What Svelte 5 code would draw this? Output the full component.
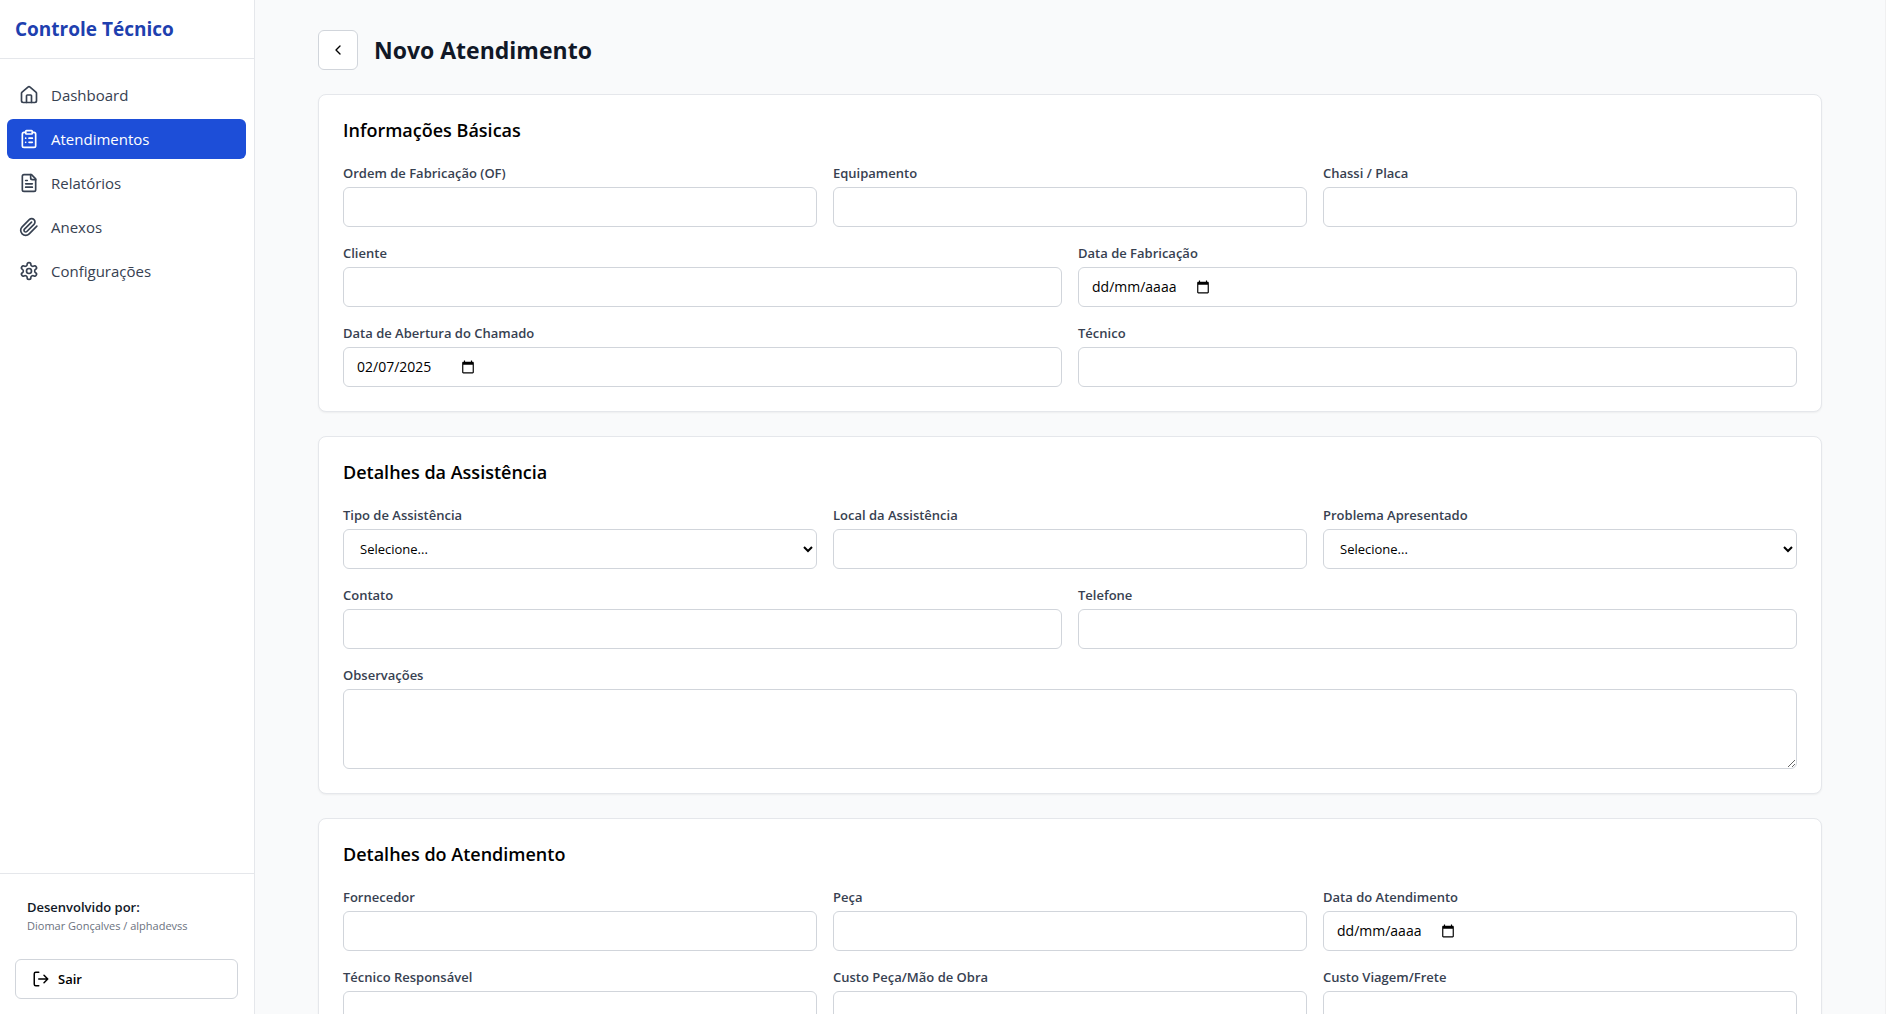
<script lang="ts">
  type Field = {
    id: string;
    label: string;
    kind?: 'text' | 'date' | 'select' | 'area';
    value?: string;
  };
  type Section = { title: string; rows: Field[][] };

  const nav = [
    { label: 'Dashboard', icon: 'home' },
    { label: 'Atendimentos', icon: 'clipboard', active: true },
    { label: 'Relatórios', icon: 'file' },
    { label: 'Anexos', icon: 'clip' },
    { label: 'Configurações', icon: 'gear' }
  ];

  const sections: Section[] = [
    {
      title: 'Informações Básicas',
      rows: [
        [
          { id: 'of', label: 'Ordem de Fabricação (OF)' },
          { id: 'equipamento', label: 'Equipamento' },
          { id: 'chassi', label: 'Chassi / Placa' }
        ],
        [
          { id: 'cliente', label: 'Cliente' },
          { id: 'fabricacao', label: 'Data de Fabricação', kind: 'date' }
        ],
        [
          { id: 'abertura', label: 'Data de Abertura do Chamado', kind: 'date', value: '02/07/2025' },
          { id: 'tecnico', label: 'Técnico' }
        ]
      ]
    },
    {
      title: 'Detalhes da Assistência',
      rows: [
        [
          { id: 'tipo', label: 'Tipo de Assistência', kind: 'select' },
          { id: 'local', label: 'Local da Assistência' },
          { id: 'problema', label: 'Problema Apresentado', kind: 'select' }
        ],
        [
          { id: 'contato', label: 'Contato' },
          { id: 'telefone', label: 'Telefone' }
        ],
        [{ id: 'observacoes', label: 'Observações', kind: 'area' }]
      ]
    },
    {
      title: 'Detalhes do Atendimento',
      rows: [
        [
          { id: 'fornecedor', label: 'Fornecedor' },
          { id: 'peca', label: 'Peça' },
          { id: 'atendimento', label: 'Data do Atendimento', kind: 'date' }
        ],
        [
          { id: 'responsavel', label: 'Técnico Responsável' },
          { id: 'custo-peca', label: 'Custo Peça/Mão de Obra' },
          { id: 'custo-viagem', label: 'Custo Viagem/Frete' }
        ]
      ]
    }
  ];
</script>

<div class="shell">
  <aside class="sidebar">
    <div class="brand">Controle Técnico</div>
    <nav>
      {#each nav as item}
        <a href="#{item.icon}" class:active={item.active}>
          <svg class="icon" viewBox="0 0 24 24" aria-hidden="true">
            {#if item.icon === 'home'}
              <path d="M15 21v-8a1 1 0 0 0-1-1h-4a1 1 0 0 0-1 1v8" />
              <path d="M3 10a2 2 0 0 1 .709-1.528l7-5.999a2 2 0 0 1 2.582 0l7 5.999A2 2 0 0 1 21 10v9a2 2 0 0 1-2 2H5a2 2 0 0 1-2-2z" />
            {:else if item.icon === 'clipboard'}
              <rect x="8" y="2" width="8" height="4" rx="1" />
              <path d="M16 4h2a2 2 0 0 1 2 2v14a2 2 0 0 1-2 2H6a2 2 0 0 1-2-2V6a2 2 0 0 1 2-2h2M12 11h4M12 16h4M8 11h.01M8 16h.01" />
            {:else if item.icon === 'file'}
              <path d="M15 2H6a2 2 0 0 0-2 2v16a2 2 0 0 0 2 2h12a2 2 0 0 0 2-2V7Z" />
              <path d="M14 2v4a2 2 0 0 0 2 2h4M10 9H8M16 13H8M16 17H8" />
            {:else if item.icon === 'clip'}
              <path d="m21.44 11.05-9.19 9.19a6 6 0 0 1-8.49-8.49l8.57-8.57A4 4 0 1 1 18 8.84l-8.59 8.57a2 2 0 0 1-2.83-2.83l8.49-8.48" />
            {:else}
              <path d="M12.22 2h-.44a2 2 0 0 0-2 2v.18a2 2 0 0 1-1 1.73l-.43.25a2 2 0 0 1-2 0l-.15-.08a2 2 0 0 0-2.73.73l-.22.38a2 2 0 0 0 .73 2.73l.15.1a2 2 0 0 1 1 1.72v.51a2 2 0 0 1-1 1.74l-.15.09a2 2 0 0 0-.73 2.73l.22.38a2 2 0 0 0 2.73.73l.15-.08a2 2 0 0 1 2 0l.43.25a2 2 0 0 1 1 1.73V20a2 2 0 0 0 2 2h.44a2 2 0 0 0 2-2v-.18a2 2 0 0 1 1-1.73l.43-.25a2 2 0 0 1 2 0l.15.08a2 2 0 0 0 2.73-.73l.22-.39a2 2 0 0 0-.73-2.73l-.15-.08a2 2 0 0 1-1-1.74v-.5a2 2 0 0 1 1-1.74l.15-.09a2 2 0 0 0 .73-2.73l-.22-.38a2 2 0 0 0-2.73-.73l-.15.08a2 2 0 0 1-2 0l-.43-.25a2 2 0 0 1-1-1.73V4a2 2 0 0 0-2-2z" />
              <circle cx="12" cy="12" r="3" />
            {/if}
          </svg>
          <span>{item.label}</span>
        </a>
      {/each}
    </nav>
    <div class="foot">
      <div class="credit">
        <strong>Desenvolvido por:</strong>
        <span>Diomar Gonçalves / alphadevss</span>
      </div>
      <button type="button" class="logout">
        <svg class="icon medium" viewBox="0 0 24 24" aria-hidden="true">
          <path d="M9 21H5a2 2 0 0 1-2-2V5a2 2 0 0 1 2-2h4M16 17l5-5-5-5M21 12H9" />
        </svg>
        Sair
      </button>
    </div>
  </aside>

  <main>
    <div class="content">
      <header>
        <button type="button" class="back" aria-label="Voltar">
          <svg class="icon small" viewBox="0 0 24 24" aria-hidden="true">
            <path d="m15 18-6-6 6-6" />
          </svg>
        </button>
        <h1>Novo Atendimento</h1>
      </header>

      <form>
        {#each sections as section}
          <section class="card">
            <h2>{section.title}</h2>
            <div class="rows">
              {#each section.rows as row}
                <div class="row">
                  {#each row as field}
                    <div class="field">
                      <label for={field.id}>{field.label}</label>
                      {#if field.kind === 'select'}
                        <select id={field.id} class="control">
                          <option>Selecione...</option>
                        </select>
                      {:else if field.kind === 'area'}
                        <textarea id={field.id} class="control"></textarea>
                      {:else if field.kind === 'date'}
                        <div class="control date">
                          <input id={field.id} type="text" placeholder="dd/mm/aaaa" value={field.value ?? ''} />
                          <button type="button" aria-label="Abrir calendário">
                            <svg viewBox="0 0 24 24" aria-hidden="true">
                              <path d="M20 3h-1V1h-2v2H7V1H5v2H4c-1.1 0-2 .9-2 2v16c0 1.100.9 2 2 2h16c1.100 0 2-.9 2-2V5c0-1.100-.9-2-2-2zm0 18H4V8h16v13z" />
                            </svg>
                          </button>
                        </div>
                      {:else}
                        <input id={field.id} type="text" class="control" />
                      {/if}
                    </div>
                  {/each}
                </div>
              {/each}
            </div>
          </section>
        {/each}
      </form>
    </div>
  </main>
</div>

<style>
  :global(body) {
    margin: 0;
  }
  .shell {
    display: flex;
    height: 100vh;
    font-family: 'Segoe UI', 'Open Sans', 'Noto Sans', sans-serif;
    font-size: 13px;
    line-height: 20px;
    color: #000;
    background: #f9fafb;
  }
  .shell *,
  .shell {
    box-sizing: border-box;
  }
  button,
  input,
  select,
  textarea {
    font: inherit;
    color: inherit;
  }
  button {
    cursor: pointer;
  }
  .icon {
    flex: none;
    width: 20px;
    height: 20px;
    fill: none;
    stroke: currentColor;
    stroke-width: 2;
    stroke-linecap: round;
    stroke-linejoin: round;
  }
  .icon.medium {
    width: 18px;
    height: 18px;
  }
  .icon.small {
    width: 16px;
    height: 16px;
  }

  .sidebar {
    display: flex;
    flex-direction: column;
    flex: none;
    width: 255px;
    background: #fff;
    border-right: 1px solid #e5e7eb;
  }
  .brand {
    padding: 15px;
    border-bottom: 1px solid #e5e7eb;
    font-size: 19px;
    line-height: 28px;
    font-weight: 700;
    color: #1e40af;
  }
  nav {
    display: flex;
    flex-direction: column;
    flex: 1;
    gap: 4px;
    padding: 16px 8px 16px 7px;
  }
  nav a {
    display: flex;
    align-items: center;
    gap: 12px;
    height: 40px;
    padding: 0 12px;
    border-radius: 6px;
    font-size: 15px;
    line-height: 24px;
    color: #374151;
    text-decoration: none;
  }
  nav a.active {
    background: #1d4ed8;
    color: #fff;
  }
  .foot {
    display: flex;
    flex-direction: column;
    gap: 16px;
    padding: 15px 16px 15px 15px;
    border-top: 1px solid #e5e7eb;
  }
  .credit {
    display: flex;
    flex-direction: column;
    padding: 8px 12px;
  }
  .credit strong {
    font-weight: 600;
    color: #111827;
  }
  .credit span {
    font-size: 11px;
    line-height: 18px;
    color: #6b7280;
  }
  .logout,
  .back {
    display: flex;
    align-items: center;
    height: 40px;
    border: 1px solid #d1d5db;
    border-radius: 6px;
    background: #fff;
  }
  .logout {
    gap: 8px;
    padding: 0 16px;
    font-weight: 600;
  }
  .back {
    justify-content: center;
    width: 40px;
    padding: 0;
  }

  main {
    flex: 1;
    min-width: 0;
    overflow-y: auto;
    scrollbar-width: none;
    border-right: 1px solid #f0f0f1;
  }
  .content {
    max-width: 1536px;
    margin: 0 auto;
    padding: 30px 16px;
  }
  header {
    display: flex;
    align-items: center;
    gap: 16px;
    margin-bottom: 24px;
  }
  h1 {
    margin: 0;
    font-size: 23px;
    line-height: 32px;
    font-weight: 700;
    color: #111827;
  }
  form {
    display: flex;
    flex-direction: column;
    gap: 24px;
  }
  .card {
    padding: 24px;
    background: #fff;
    border: 1px solid #e5e7eb;
    border-radius: 8px;
    box-shadow: 0 1px 2px rgba(0, 0, 0, 0.05);
  }
  h2 {
    margin: 0 0 22px;
    font-size: 18px;
    line-height: 22px;
    font-weight: 600;
  }
  .rows {
    display: flex;
    flex-direction: column;
    gap: 16px;
  }
  .row {
    display: grid;
    grid-auto-flow: column;
    grid-auto-columns: minmax(0, 1fr);
    gap: 16px;
  }
  .field {
    display: flex;
    flex-direction: column;
    gap: 4px;
  }
  label {
    font-weight: 600;
    color: #374151;
  }
  .control {
    width: 100%;
    height: 40px;
    margin: 0;
    padding: 0 12px;
    border: 1px solid #d1d5db;
    border-radius: 6px;
    background-color: #fff;
  }
  textarea.control {
    height: 80px;
    padding: 8px 12px;
    resize: vertical;
  }
  .date {
    display: flex;
    align-items: center;
    gap: 16px;
    padding: 0 13px;
    font-size: 14px;
  }
  .date input {
    width: 88px;
    padding: 0;
    border: 0;
    outline: 0;
    background: none;
  }
  .date input::placeholder {
    color: #000;
    opacity: 1;
  }
  .date button {
    display: flex;
    padding: 0;
    border: 0;
    background: none;
  }
  .date svg {
    width: 14px;
    height: 14px;
  }
</style>
